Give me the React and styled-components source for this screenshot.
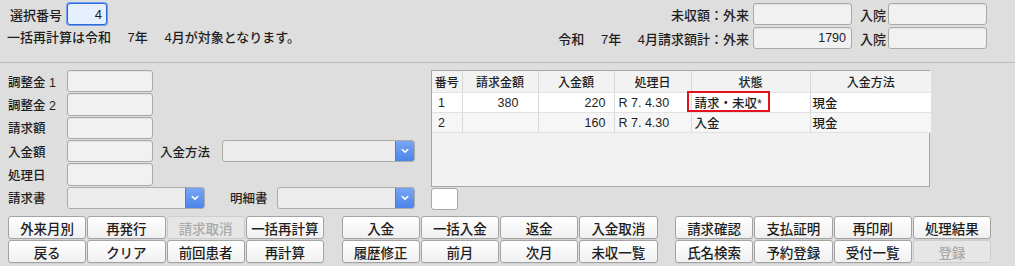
import React from 'react';
import styled, { createGlobalStyle } from 'styled-components';

const GlobalStyle = createGlobalStyle`
  html, body {
    margin: 0;
    padding: 0;
    background: #dedede;
  }
  body {
    font-family: "Liberation Sans", "Noto Sans CJK JP", sans-serif;
    font-size: 12.5px;
    font-weight: 500;
    color: #1e1e1e;
  }
`;

const Screen = styled.div`
  width: 1015px;
  height: 266px;
  background: #dedede;
  overflow: hidden;
`;

/* ---------- header ---------- */
const Header = styled.div`
  height: 63px;
  box-sizing: border-box;
  padding: 3px 28px 0 0;
  display: flex;
  justify-content: space-between;
  border-bottom: 1px solid #b9b9b9;
  font-size: 13px;
`;

const HeaderLeft = styled.div`
  display: flex;
  flex-direction: column;
`;

const SelectRow = styled.div`
  display: flex;
  align-items: center;
  height: 22px;
`;

const SelectLabel = styled.span`
  width: 57px;
  padding-left: 10px;
`;

const Notice = styled.div`
  margin-top: 5px;
  padding-left: 7px;
  line-height: 15px;
  white-space: pre;
`;

const TotalsGrid = styled.div`
  display: grid;
  grid-template-columns: auto 99px 28px 99px;
  grid-auto-rows: 22px;
  column-gap: 4px;
  row-gap: 2px;
  align-items: center;
`;

const TotalsLabel = styled.span`
  justify-self: ${({ $left }) => ($left ? 'start' : 'end')};
  padding-left: ${({ $left }) => ($left ? '4px' : '0')};
  white-space: pre;
`;

const Field = styled.div`
  box-sizing: border-box;
  width: ${({ $w }) => $w}px;
  height: ${({ $h }) => $h || 22.3}px;
  border: 1px solid #a9a9a9;
  border-radius: 3px;
  background: ${({ $bg }) => $bg || '#f1f1f1'};
  box-shadow: inset 0 1px 1px rgba(0, 0, 0, 0.06);
  display: flex;
  align-items: center;
  justify-content: flex-end;
  padding-right: 5px;
  font-size: 12.5px;
  flex-shrink: 0;
`;

const FocusField = styled(Field)`
  border: 1px solid #2f67d4;
  box-shadow: 0 0 0 1px #6e9ff0;
  background: #e6effd;
  padding-right: 4px;
  font-size: 13px;
`;

/* ---------- middle ---------- */
const Middle = styled.div`
  display: flex;
  gap: 16px;
  padding: 7px 0 0 8px;
  height: 140px;
`;

const Form = styled.div`
  width: 407px;
  display: flex;
  flex-direction: column;
  gap: 1px;
`;

const FormRow = styled.div`
  display: flex;
  align-items: center;
  height: 22.33px;
`;

const FormLabel = styled.span`
  width: 59px;
  flex-shrink: 0;
  white-space: pre;
`;

const SubLabel = styled.span`
  width: ${({ $w }) => $w}px;
  margin-left: ${({ $ml }) => $ml}px;
  flex-shrink: 0;
`;

const SelectBox = styled.div`
  box-sizing: border-box;
  width: ${({ $w }) => $w}px;
  height: 22.3px;
  display: flex;
  border: 1px solid #ababab;
  border-radius: 3px;
  background: #ececec;
  overflow: hidden;
  flex-shrink: 0;
`;

const SelectBody = styled.div`
  flex: 1;
`;

const SelectArrow = styled.div`
  width: 18px;
  background: linear-gradient(#78a6f4, #4c84ea);
  border-left: 1px solid #4a7fd8;
  display: flex;
  align-items: center;
  justify-content: center;
`;

const Chevron = () => (
  <svg width="8" height="6" viewBox="0 0 8 6">
    <path d="M1.2 1.5 L4 4.2 L6.8 1.5" fill="none" stroke="#fff" strokeWidth="1.6" strokeLinecap="round" strokeLinejoin="round" />
  </svg>
);

const Dropdown = ({ w }) => (
  <SelectBox $w={w}>
    <SelectBody />
    <SelectArrow>
      <Chevron />
    </SelectArrow>
  </SelectBox>
);

const TableColumn = styled.div`
  width: 499px;
  display: flex;
  flex-direction: column;
  gap: 1px;
`;

const TableFrame = styled.div`
  position: relative;
  box-sizing: border-box;
  height: 117px;
  border: 1px solid #a7a7a7;
  background: #f2f2f2;
`;

const Grid = styled.table`
  width: 100%;
  table-layout: fixed;
  border-collapse: collapse;
  font-size: 12.5px;
`;

const HeadCell = styled.th`
  height: 21px;
  padding: 0;
  font-weight: 500;
  font-size: 12px;
  text-align: center;
  background: #f2f2f2;
  border-left: 1px solid #d9d9d9;
  border-bottom: 1px solid #e2e2e2;
  &:first-child { border-left: none; }
`;

const Row = styled.tr`
  background: ${({ $alt }) => ($alt ? '#f6f6f6' : '#ffffff')};
`;

const Cell = styled.td`
  height: 18px;
  padding: 0 0 0 ${({ $pl }) => $pl}px;
  border-left: 1px solid #d9d9d9;
  border-bottom: 1px solid #e2e2e2;
  white-space: pre;
  &:first-child { border-left: none; }
`;

const Marker = styled.div`
  position: absolute;
  left: 255px;
  top: 20px;
  width: 83px;
  height: 21px;
  box-sizing: border-box;
  border: 2.5px solid #e3121c;
  pointer-events: none;
`;

const SmallBox = styled.div`
  width: 27px;
  height: 22px;
  box-sizing: border-box;
  background: #ffffff;
  border: 1px solid #a9a9a9;
  border-radius: 3px;
`;

/* ---------- buttons ---------- */
const ButtonBar = styled.div`
  display: flex;
  gap: 17.5px;
  padding: 6px 0 0 8px;
`;

const ButtonGroup = styled.div`
  width: 316px;
  display: grid;
  grid-template-columns: repeat(4, 1fr);
  grid-auto-rows: 23px;
  column-gap: 1px;
  row-gap: 1.4px;
`;

const Button = styled.button`
  margin: 0;
  padding: 0;
  font-family: inherit;
  font-size: 13.5px;
  font-weight: 500;
  color: ${({ disabled }) => (disabled ? '#a9a9a9' : '#1e1e1e')};
  border: 1px solid ${({ disabled }) => (disabled ? '#cdcdcd' : '#a3a3a3')};
  border-radius: 3px;
  background: ${({ disabled }) =>
    disabled ? '#e6e6e6' : 'linear-gradient(#ffffff, #f0f0f0)'};
  box-shadow: ${({ disabled }) => (disabled ? 'none' : '0 1px 0 rgba(0,0,0,0.05)')};
`;

const columns = [
  { key: 'no', title: '番号', w: 30, pl: 6 },
  { key: 'bill', title: '請求金額', w: 76, pl: 35 },
  { key: 'paid', title: '入金額', w: 76, pl: 46 },
  { key: 'date', title: '処理日', w: 77, pl: 4 },
  { key: 'state', title: '状態', w: 119, pl: 3 },
  { key: 'method', title: '入金方法', w: 121, pl: 2 },
];

const rows = [
  { no: '1', bill: '380', paid: '220', date: 'R 7. 4.30', state: '請求・未収*', method: '現金' },
  { no: '2', bill: '', paid: '160', date: 'R 7. 4.30', state: '入金', method: '現金' },
];

const buttonGroups = [
  [
    { t: '外来月別' }, { t: '再発行' }, { t: '請求取消', off: true }, { t: '一括再計算' },
    { t: '戻る' }, { t: 'クリア' }, { t: '前回患者' }, { t: '再計算' },
  ],
  [
    { t: '入金' }, { t: '一括入金' }, { t: '返金' }, { t: '入金取消' },
    { t: '履歴修正' }, { t: '前月' }, { t: '次月' }, { t: '未収一覧' },
  ],
  [
    { t: '請求確認' }, { t: '支払証明' }, { t: '再印刷' }, { t: '処理結果' },
    { t: '氏名検索' }, { t: '予約登録' }, { t: '受付一覧' }, { t: '登録', off: true },
  ],
];

const App = () => {
  return (
    <Screen>
      <GlobalStyle />
      <Header>
        <HeaderLeft>
          <SelectRow>
            <SelectLabel>選択番号</SelectLabel>
            <FocusField $w={40} $h={22}>4</FocusField>
          </SelectRow>
          <Notice>一括再計算は令和　 7年　 4月が対象となります。</Notice>
        </HeaderLeft>
        <TotalsGrid>
          <TotalsLabel>未収額：外来</TotalsLabel>
          <Field $w={99} $h={22} />
          <TotalsLabel $left>入院</TotalsLabel>
          <Field $w={99} $h={22} />
          <TotalsLabel>令和　 7年　 4月請求額計：外来</TotalsLabel>
          <Field $w={99} $h={22}>1790</Field>
          <TotalsLabel $left>入院</TotalsLabel>
          <Field $w={99} $h={22} />
        </TotalsGrid>
      </Header>

      <Middle>
        <Form>
          <FormRow>
            <FormLabel>調整金 1</FormLabel>
            <Field $w={86} />
          </FormRow>
          <FormRow>
            <FormLabel>調整金 2</FormLabel>
            <Field $w={86} />
          </FormRow>
          <FormRow>
            <FormLabel>請求額</FormLabel>
            <Field $w={86} />
          </FormRow>
          <FormRow>
            <FormLabel>入金額</FormLabel>
            <Field $w={86} />
            <SubLabel $w={62} $ml={7}>入金方法</SubLabel>
            <Dropdown w={193} />
          </FormRow>
          <FormRow>
            <FormLabel>処理日</FormLabel>
            <Field $w={86} />
          </FormRow>
          <FormRow>
            <FormLabel>請求書</FormLabel>
            <Dropdown w={138} />
            <SubLabel $w={47} $ml={25}>明細書</SubLabel>
            <Dropdown w={138} />
          </FormRow>
        </Form>

        <TableColumn>
          <TableFrame>
            <Grid>
              <colgroup>
                {columns.map((c) => (
                  <col key={c.key} style={{ width: c.w }} />
                ))}
              </colgroup>
              <thead>
                <tr>
                  {columns.map((c) => (
                    <HeadCell key={c.key}>{c.title}</HeadCell>
                  ))}
                </tr>
              </thead>
              <tbody>
                {rows.map((r, i) => (
                  <Row key={r.no} $alt={i % 2 === 1}>
                    {columns.map((c) => (
                      <Cell key={c.key} $pl={c.pl}>{r[c.key]}</Cell>
                    ))}
                  </Row>
                ))}
              </tbody>
            </Grid>
            <Marker />
          </TableFrame>
          <SmallBox />
        </TableColumn>
      </Middle>

      <ButtonBar>
        {buttonGroups.map((g, gi) => (
          <ButtonGroup key={gi}>
            {g.map((b) => (
              <Button key={b.t} disabled={b.off}>{b.t}</Button>
            ))}
          </ButtonGroup>
        ))}
      </ButtonBar>
    </Screen>
  );
};

export default App;
